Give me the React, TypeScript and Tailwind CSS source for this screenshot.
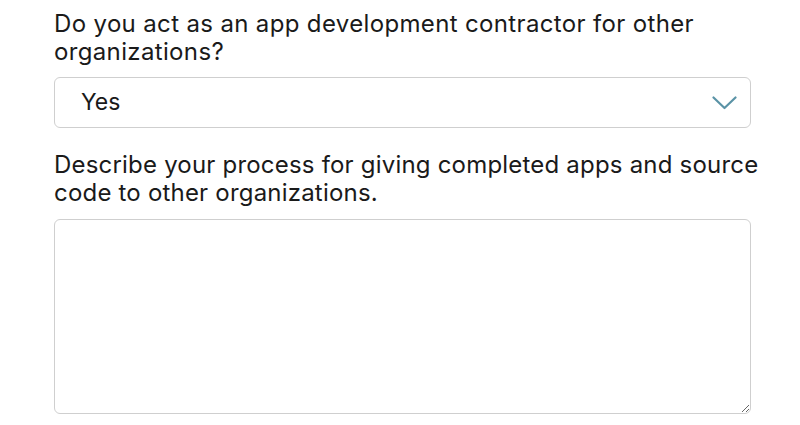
export default function App() {
  return (
    <div className="w-[800px] h-[425px] bg-white overflow-hidden" style={{ fontFamily: 'Inter, "Liberation Sans", Arial, sans-serif' }}>
      <div className="pl-[54px] w-[751px] pt-[10px]">
        <label className="block w-[740px] text-[24px] leading-[28px] text-[#1a1a1a] tracking-[0.35px]">
          Do you act as an app development contractor for other organizations?
        </label>
        <div className="mt-[11px] h-[51px] border border-[#cfcfcf] rounded-[6px] flex items-center justify-between pl-[26px] pr-[13px]">
          <span className="text-[23px] text-[#1a1a1a]">Yes</span>
          <svg width="25" height="14" viewBox="0 0 25 14" fill="none">
            <path d="M1.5 1.5 L12.5 12 L23.5 1.5" stroke="#5a93a6" strokeWidth="2.2" strokeLinecap="round" strokeLinejoin="round" />
          </svg>
        </div>
        <label className="block w-[740px] mt-[23px] text-[24px] leading-[28px] text-[#1a1a1a] tracking-[0.2px]">
          Describe your process for giving completed apps and source code to other organizations.
        </label>
        <textarea className="block mt-[12px] w-full h-[195px] border border-[#cfcfcf] rounded-[6px] resize-y outline-none" />
      </div>
    </div>
  );
}
